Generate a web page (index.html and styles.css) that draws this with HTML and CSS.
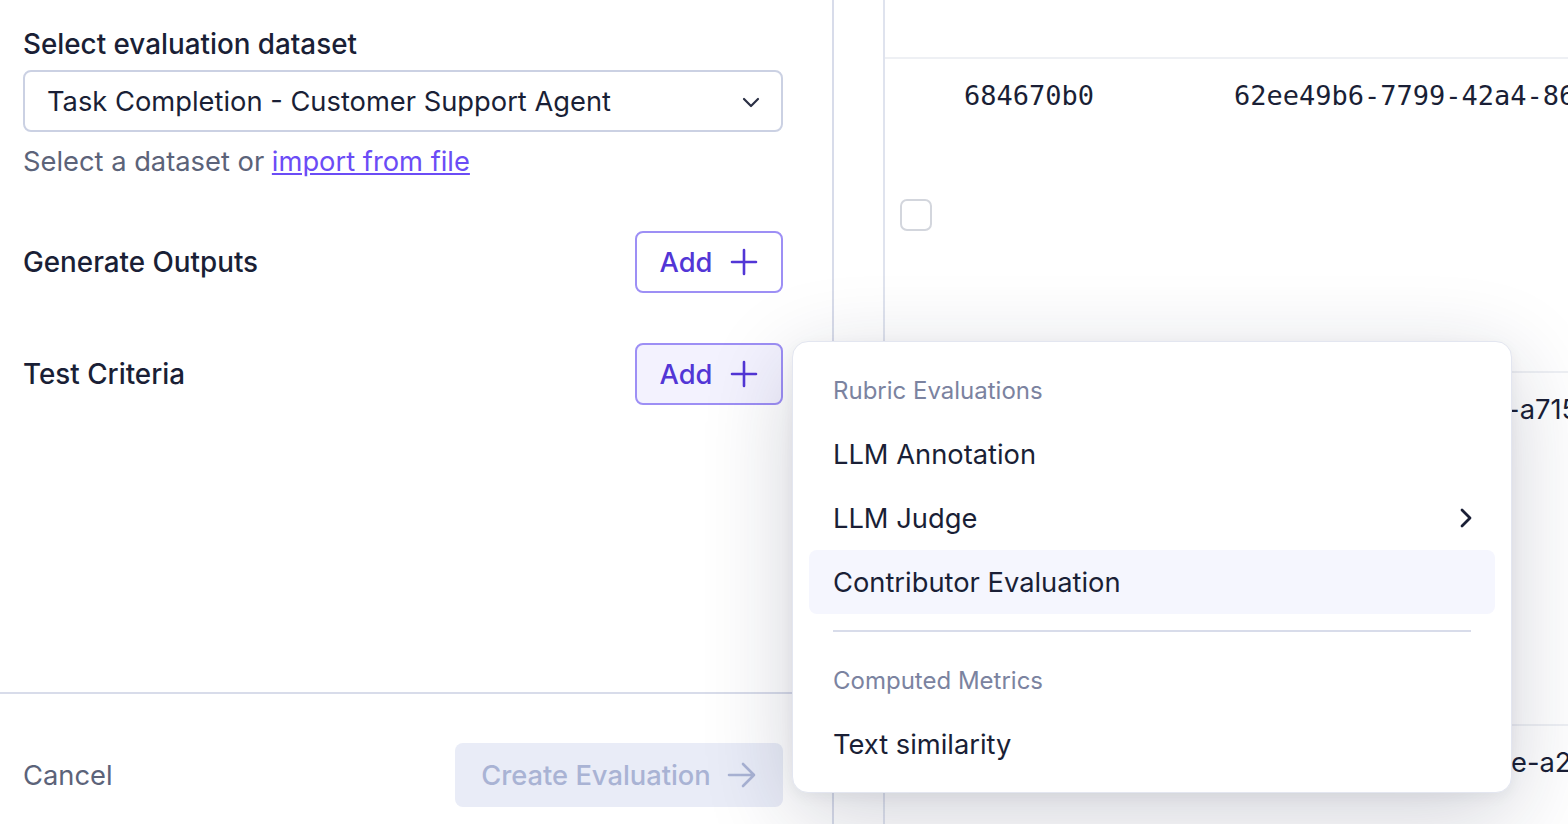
FILE: index.html
```html
<!DOCTYPE html>
<html lang="en">
<head>
  <meta charset="UTF-8">
  <title>Create Evaluation</title>
  <link rel="stylesheet" href="styles.css">
</head>
<body>
  <div class="page">

    <section class="panel">
      <div class="panel-body">
        <div class="field">
          <label class="label">Select evaluation dataset</label>
          <div class="select">
            <span>Task Completion - Customer Support Agent</span>
            <svg class="chev" width="18" height="12" viewBox="0 0 18 12"><path d="M2 2l7 7 7-7" fill="none" stroke="#2b3045" stroke-width="2.2" stroke-linecap="round" stroke-linejoin="round"/></svg>
          </div>
          <p class="hint">Select a dataset or <a href="#">import from file</a></p>
        </div>

        <div class="row">
          <span class="label">Generate Outputs</span>
          <button class="add">Add
            <svg width="28" height="28" viewBox="0 0 28 28"><path d="M14 2v24M2 14h24" stroke="currentColor" stroke-width="2.6" stroke-linecap="round"/></svg>
          </button>
        </div>

        <div class="row">
          <span class="label">Test Criteria</span>
          <button class="add active">Add
            <svg width="28" height="28" viewBox="0 0 28 28"><path d="M14 2v24M2 14h24" stroke="currentColor" stroke-width="2.6" stroke-linecap="round"/></svg>
          </button>
        </div>
      </div>

      <div class="panel-footer">
        <span class="cancel">Cancel</span>
        <button class="create" disabled>Create Evaluation
          <svg width="30" height="26" viewBox="0 0 30 26"><path d="M2 13h25M16 2l11 11-11 11" fill="none" stroke="currentColor" stroke-width="2.6" stroke-linecap="round" stroke-linejoin="round"/></svg>
        </button>
      </div>
    </section>

    <section class="results">
      <div class="table">
        <div class="thead"></div>
        <div class="tr first">
          <div class="check"><span class="box"></span></div>
          <div class="td mono id">684670b0</div>
          <div class="td mono">62ee49b6-7799-42a4-86f1-3c0d9e5b71a2</div>
        </div>
        <div class="tr second">
          <div class="check"><span class="box"></span></div>
          <div class="td mono id">9b3e21c4</div>
          <div class="td">c41b7e2a-5d3f-4c8e-a715-0b9f2e6d4a13</div>
        </div>
        <div class="tr">
          <div class="check"><span class="box"></span></div>
          <div class="td mono id">1f7ac058</div>
          <div class="td">5e8d0a3b-71c2-449fe-a2d6-8e4b1c7f90a5</div>
        </div>
      </div>
    </section>

    <div class="menu">
      <div class="menu-head">Rubric Evaluations</div>
      <div class="menu-item">LLM Annotation</div>
      <div class="menu-item">LLM Judge
        <svg width="14" height="20" viewBox="0 0 14 20"><path d="M3 2l8 8-8 8" fill="none" stroke="#1a1f36" stroke-width="2.8" stroke-linecap="round" stroke-linejoin="round"/></svg>
      </div>
      <div class="menu-item hover">Contributor Evaluation</div>
      <hr class="menu-sep">
      <div class="menu-head">Computed Metrics</div>
      <div class="menu-item">Text similarity</div>
    </div>

  </div>
</body>
</html>
```

FILE: styles.css
```css
body {
  margin: 0;
  background: #fff;
  color: #1a1f36;
  font-family: Inter, "Noto Sans", sans-serif;
  font-size: 27.3px;
}
.page {
  position: relative;
  display: flex;
  height: 824px;
  overflow: hidden;
}

/* left panel */
.panel {
  width: 832px;
  flex: none;
  display: flex;
  flex-direction: column;
  border-right: 2px solid #d8dcea;
}
.panel-body {
  flex: 1;
  padding: 26px 49px 0 23px;
}
.label {
  display: block;
  font-weight: 500;
  font-size: 27.8px;
  line-height: 36px;
}
.select {
  margin-top: 8px;
  height: 58px;
  border: 2px solid #cbd1e3;
  border-radius: 8px;
  display: flex;
  align-items: center;
  justify-content: space-between;
  padding: 0 22px;
}
.chev {
  margin-right: -1px;
  margin-top: 3px;
}
.hint {
  margin: 12px 0 0;
  color: #5c6379;
  line-height: 36px;
}
.hint a {
  color: #6b4cf6;
}
.row {
  display: flex;
  align-items: center;
  justify-content: space-between;
  height: 62px;
  margin-top: 51px;
}
.row + .row {
  margin-top: 50px;
}
.add {
  width: 148px;
  height: 62px;
  display: flex;
  align-items: center;
  justify-content: center;
  gap: 18px;
  border: 2px solid #9d8ff5;
  border-radius: 8px;
  background: #fff;
  color: #5236d6;
  font: inherit;
  font-weight: 500;
  padding: 0;
}
.add.active {
  background: #f3f2fe;
}
.panel-footer {
  border-top: 2px solid #d8dcea;
  display: flex;
  align-items: center;
  justify-content: space-between;
  padding: 49px 49px 17px 23px;
}
.cancel {
  color: #5c6379;
}
.create {
  width: 328px;
  height: 64px;
  border: none;
  border-radius: 8px;
  background: #e9ecf7;
  color: #a9b3d4;
  font: inherit;
  font-weight: 500;
  display: flex;
  align-items: center;
  justify-content: center;
  gap: 16px;
}

/* results table */
.results {
  flex: 1;
  padding-left: 49px;
}
.table {
  height: 100%;
  border-left: 2px solid #dfe3ee;
}
.thead {
  height: 57px;
  border-bottom: 2px solid #eef0f4;
}
.tr {
  display: flex;
  height: 351px;
  border-bottom: 2px solid #eef0f4;
  white-space: nowrap;
}
.tr.first {
  height: 312px;
}
.check {
  width: 81px;
  display: flex;
  align-items: center;
  padding-left: 15px;
  box-sizing: border-box;
}
.box {
  width: 28px;
  height: 28px;
  border: 2px solid #d3d6dd;
  border-radius: 7px;
}
.td {
  padding-top: 18px;
  line-height: 38px;
}
.mono {
  font-family: "DejaVu Sans Mono", monospace;
  font-size: 27px;
}
.id {
  width: 270px;
  margin-left: -2px;
}

/* dropdown menu */
.menu {
  position: absolute;
  left: 792px;
  top: 341px;
  width: 686px;
  padding: 16px;
  background: #fff;
  border: 1px solid #e3e6f0;
  border-radius: 16px;
  box-shadow: 0 22px 90px rgba(26, 31, 64, 0.2), 0 4px 14px rgba(26, 31, 64, 0.05);
}
.menu-head {
  height: 64px;
  display: flex;
  align-items: center;
  padding-left: 24px;
  color: #7b83a0;
  font-size: 24px;
}
.menu-item {
  height: 64px;
  display: flex;
  align-items: center;
  justify-content: space-between;
  padding: 0 22px 0 24px;
  border-radius: 8px;
}
.menu-item.hover {
  background: #f5f6fe;
}
.menu-sep {
  margin: 16px 24px;
  border: none;
  border-top: 2px solid #d8dcea;
}
```
